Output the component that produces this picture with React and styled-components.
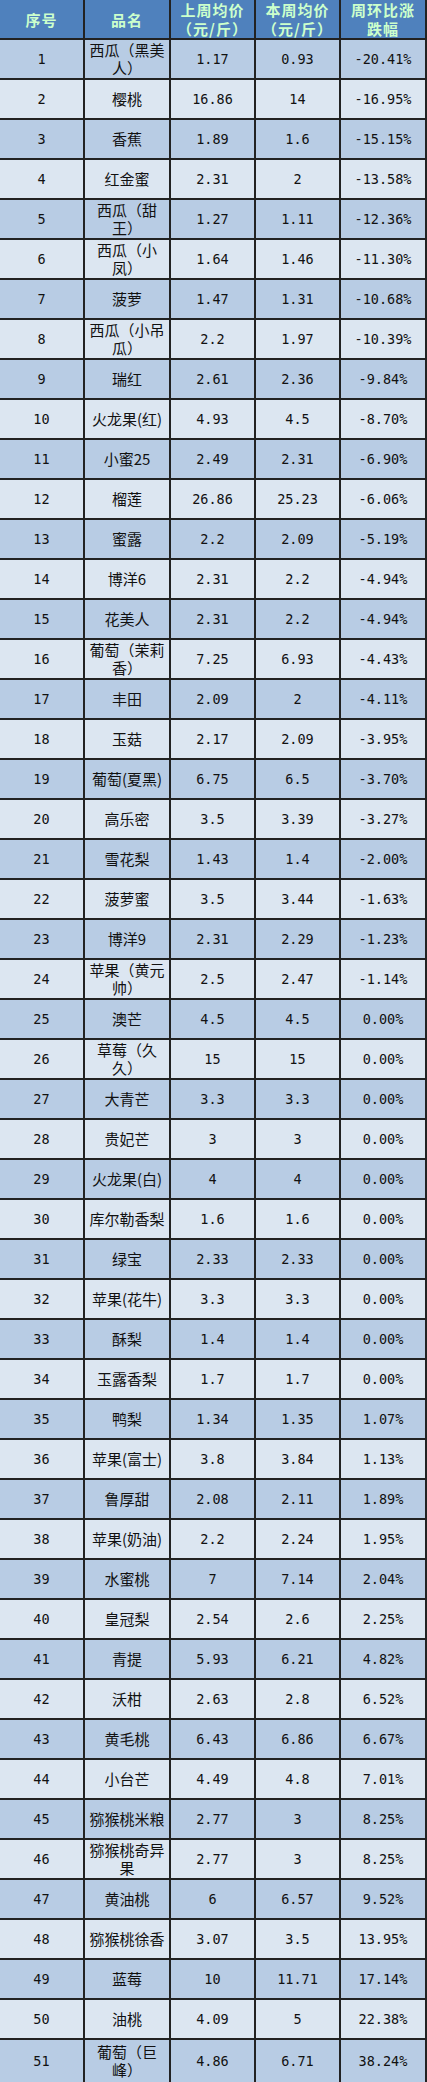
import React from "react";
import styled, { createGlobalStyle } from "styled-components";

const GlobalStyle = createGlobalStyle`
  html, body {
    margin: 0;
    padding: 0;
    background: #ffffff;
  }
`;

const rows = [
  ["西瓜（黑美人）", "1.17", "0.93", "-20.41%"],
  ["樱桃", "16.86", "14", "-16.95%"],
  ["香蕉", "1.89", "1.6", "-15.15%"],
  ["红金蜜", "2.31", "2", "-13.58%"],
  ["西瓜（甜王）", "1.27", "1.11", "-12.36%"],
  ["西瓜（小凤）", "1.64", "1.46", "-11.30%"],
  ["菠萝", "1.47", "1.31", "-10.68%"],
  ["西瓜（小吊瓜）", "2.2", "1.97", "-10.39%"],
  ["瑞红", "2.61", "2.36", "-9.84%"],
  ["火龙果(红)", "4.93", "4.5", "-8.70%"],
  ["小蜜25", "2.49", "2.31", "-6.90%"],
  ["榴莲", "26.86", "25.23", "-6.06%"],
  ["蜜露", "2.2", "2.09", "-5.19%"],
  ["博洋6", "2.31", "2.2", "-4.94%"],
  ["花美人", "2.31", "2.2", "-4.94%"],
  ["葡萄（茉莉香）", "7.25", "6.93", "-4.43%"],
  ["丰田", "2.09", "2", "-4.11%"],
  ["玉菇", "2.17", "2.09", "-3.95%"],
  ["葡萄(夏黑)", "6.75", "6.5", "-3.70%"],
  ["高乐密", "3.5", "3.39", "-3.27%"],
  ["雪花梨", "1.43", "1.4", "-2.00%"],
  ["菠萝蜜", "3.5", "3.44", "-1.63%"],
  ["博洋9", "2.31", "2.29", "-1.23%"],
  ["苹果（黄元帅）", "2.5", "2.47", "-1.14%"],
  ["澳芒", "4.5", "4.5", "0.00%"],
  ["草莓（久久）", "15", "15", "0.00%"],
  ["大青芒", "3.3", "3.3", "0.00%"],
  ["贵妃芒", "3", "3", "0.00%"],
  ["火龙果(白)", "4", "4", "0.00%"],
  ["库尔勒香梨", "1.6", "1.6", "0.00%"],
  ["绿宝", "2.33", "2.33", "0.00%"],
  ["苹果(花牛)", "3.3", "3.3", "0.00%"],
  ["酥梨", "1.4", "1.4", "0.00%"],
  ["玉露香梨", "1.7", "1.7", "0.00%"],
  ["鸭梨", "1.34", "1.35", "1.07%"],
  ["苹果(富士)", "3.8", "3.84", "1.13%"],
  ["鲁厚甜", "2.08", "2.11", "1.89%"],
  ["苹果(奶油)", "2.2", "2.24", "1.95%"],
  ["水蜜桃", "7", "7.14", "2.04%"],
  ["皇冠梨", "2.54", "2.6", "2.25%"],
  ["青提", "5.93", "6.21", "4.82%"],
  ["沃柑", "2.63", "2.8", "6.52%"],
  ["黄毛桃", "6.43", "6.86", "6.67%"],
  ["小台芒", "4.49", "4.8", "7.01%"],
  ["猕猴桃米粮", "2.77", "3", "8.25%"],
  ["猕猴桃奇异果", "2.77", "3", "8.25%"],
  ["黄油桃", "6", "6.57", "9.52%"],
  ["猕猴桃徐香", "3.07", "3.5", "13.95%"],
  ["蓝莓", "10", "11.71", "17.14%"],
  ["油桃", "4.09", "5", "22.38%"],
  ["葡萄（巨峰）", "4.86", "6.71", "38.24%"],
];

const Table = styled.div`
  display: grid;
  grid-template-columns: 83px 84px 83px 83px 84px;
  grid-template-rows: repeat(51, 38px) 1fr;
  column-gap: 2px;
  row-gap: 2px;
  width: 425px;
  height: 2082px;
  padding-right: 2px;
  background: #222222;
`;

const HeadCell = styled.div`
  display: flex;
  flex-direction: column;
  align-items: center;
  justify-content: center;
  text-align: center;
  background: #4f81bd;
  color: #ccffcc;
  font-family: "Noto Sans CJK SC", sans-serif;
  font-weight: bold;
  font-size: 15px;
  line-height: 19px;
  letter-spacing: 1px;
`;

const HeadLine = styled.span`
  display: block;
  white-space: nowrap;
`;

const Cell = styled.div`
  display: flex;
  align-items: center;
  justify-content: center;
  text-align: center;
  padding: 0 2px;
  background: ${(p) => (p.$dark ? "#b8cce4" : "#dce6f1")};
  color: #111111;
  font-family: ${(p) =>
    p.$text
      ? `"Noto Sans CJK SC", sans-serif`
      : `"DejaVu Sans Mono", "Noto Sans CJK SC", monospace`};
  font-size: ${(p) => (p.$text ? "15px" : "13.5px")};
  line-height: 18px;
  word-break: break-all;
`;

const headers = [
  ["序号"],
  ["品名"],
  ["上周均价", "（元/斤）"],
  ["本周均价", "（元/斤）"],
  ["周环比涨", "跌幅"],
];

export default function App() {
  return (
    <>
      <GlobalStyle />
      <Table>
        {headers.map((h) => (
          <HeadCell key={h.join("")}>
            {h.map((line) => (
              <HeadLine key={line}>{line}</HeadLine>
            ))}
          </HeadCell>
        ))}
        {rows.map((r, i) => {
          const dark = i % 2 === 0;
          return (
            <React.Fragment key={i}>
              <Cell $dark={dark}>{i + 1}</Cell>
              <Cell $dark={dark} $text>
                {r[0]}
              </Cell>
              <Cell $dark={dark}>{r[1]}</Cell>
              <Cell $dark={dark}>{r[2]}</Cell>
              <Cell $dark={dark}>{r[3]}</Cell>
            </React.Fragment>
          );
        })}
      </Table>
    </>
  );
}
